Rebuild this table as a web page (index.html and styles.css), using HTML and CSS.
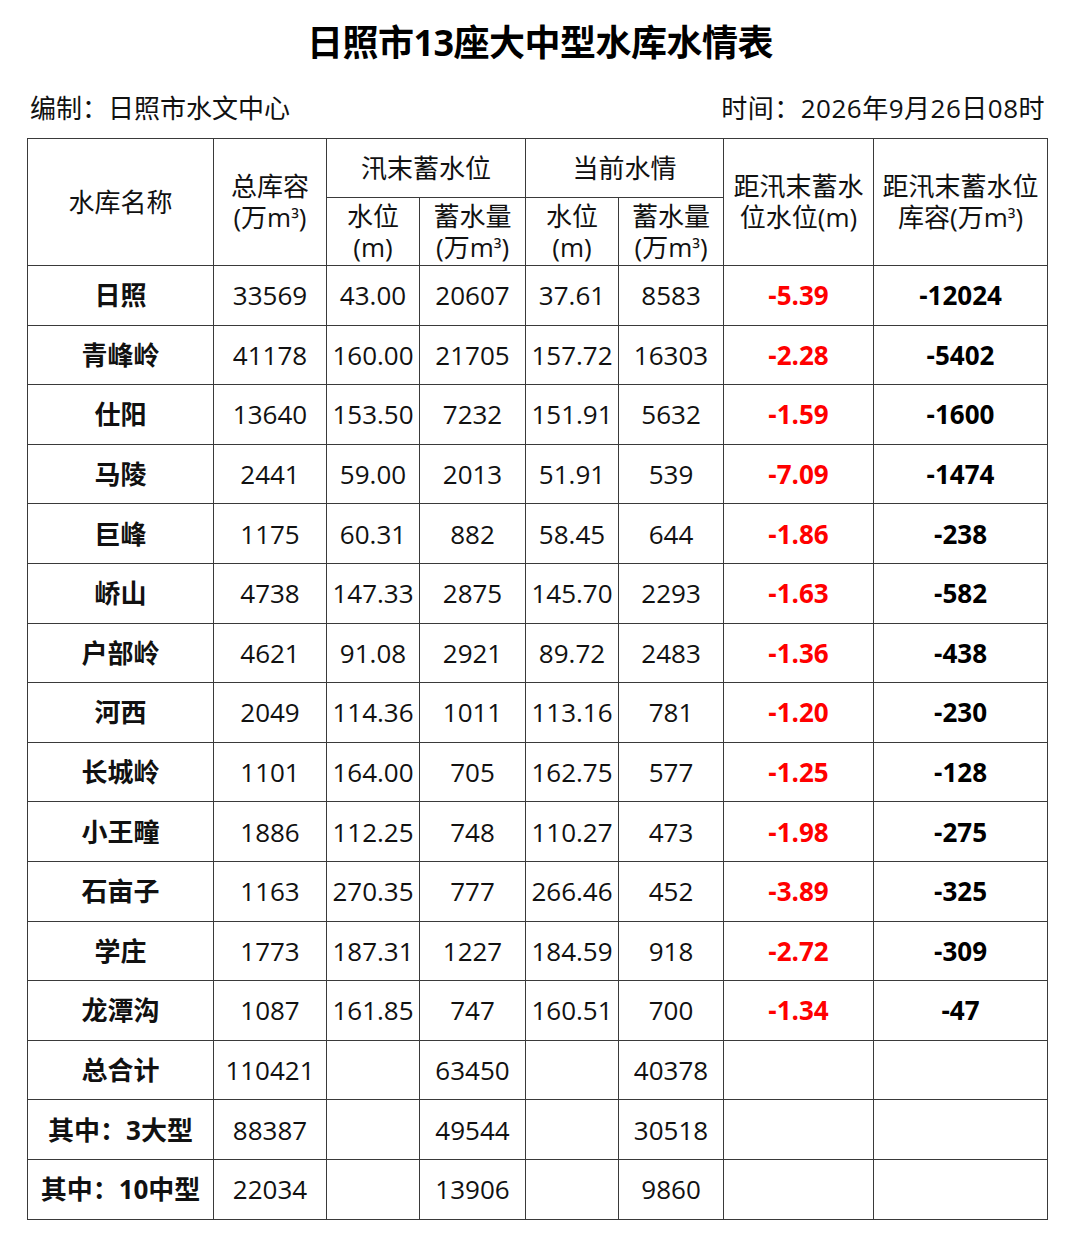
FILE: index.html
```html
<!DOCTYPE html>
<html lang="zh">
<head>
<meta charset="utf-8">
<link rel="stylesheet" href="styles.css">
</head>
<body>
<div class="page">
  <h1 class="title">日照市13座大中型水库水情表</h1>
  <div class="meta">
    <span>编制：日照市水文中心</span>
    <span class="time">时间：2026年9月26日08时</span>
  </div>
  <table class="grid">
    <colgroup>
      <col class="c1"><col class="c2"><col class="c3"><col class="c4"><col class="c5"><col class="c6"><col class="c7"><col class="c8">
    </colgroup>
    <thead>
      <tr class="h1row">
        <th rowspan="2">水库名称</th>
        <th rowspan="2"><span class="ln">总库容</span><span class="ln">(万m<span class="sup">³</span>)</span></th>
        <th colspan="2">汛末蓄水位</th>
        <th colspan="2">当前水情</th>
        <th rowspan="2"><span class="ln">距汛末蓄水</span><span class="ln">位水位(m)</span></th>
        <th rowspan="2"><span class="ln">距汛末蓄水位</span><span class="ln">库容(万m<span class="sup">³</span>)</span></th>
      </tr>
      <tr class="h2row">
        <th><span class="ln">水位</span><span class="ln">(m)</span></th>
        <th><span class="ln">蓄水量</span><span class="ln">(万m<span class="sup">³</span>)</span></th>
        <th><span class="ln">水位</span><span class="ln">(m)</span></th>
        <th><span class="ln">蓄水量</span><span class="ln">(万m<span class="sup">³</span>)</span></th>
      </tr>
    </thead>
    <tbody>
      <tr><td class="name">日照</td><td>33569</td><td>43.00</td><td>20607</td><td>37.61</td><td>8583</td><td class="red">-5.39</td><td class="bold">-12024</td></tr>
      <tr><td class="name">青峰岭</td><td>41178</td><td>160.00</td><td>21705</td><td>157.72</td><td>16303</td><td class="red">-2.28</td><td class="bold">-5402</td></tr>
      <tr><td class="name">仕阳</td><td>13640</td><td>153.50</td><td>7232</td><td>151.91</td><td>5632</td><td class="red">-1.59</td><td class="bold">-1600</td></tr>
      <tr><td class="name">马陵</td><td>2441</td><td>59.00</td><td>2013</td><td>51.91</td><td>539</td><td class="red">-7.09</td><td class="bold">-1474</td></tr>
      <tr><td class="name">巨峰</td><td>1175</td><td>60.31</td><td>882</td><td>58.45</td><td>644</td><td class="red">-1.86</td><td class="bold">-238</td></tr>
      <tr><td class="name">峤山</td><td>4738</td><td>147.33</td><td>2875</td><td>145.70</td><td>2293</td><td class="red">-1.63</td><td class="bold">-582</td></tr>
      <tr><td class="name">户部岭</td><td>4621</td><td>91.08</td><td>2921</td><td>89.72</td><td>2483</td><td class="red">-1.36</td><td class="bold">-438</td></tr>
      <tr><td class="name">河西</td><td>2049</td><td>114.36</td><td>1011</td><td>113.16</td><td>781</td><td class="red">-1.20</td><td class="bold">-230</td></tr>
      <tr><td class="name">长城岭</td><td>1101</td><td>164.00</td><td>705</td><td>162.75</td><td>577</td><td class="red">-1.25</td><td class="bold">-128</td></tr>
      <tr><td class="name">小王疃</td><td>1886</td><td>112.25</td><td>748</td><td>110.27</td><td>473</td><td class="red">-1.98</td><td class="bold">-275</td></tr>
      <tr><td class="name">石亩子</td><td>1163</td><td>270.35</td><td>777</td><td>266.46</td><td>452</td><td class="red">-3.89</td><td class="bold">-325</td></tr>
      <tr><td class="name">学庄</td><td>1773</td><td>187.31</td><td>1227</td><td>184.59</td><td>918</td><td class="red">-2.72</td><td class="bold">-309</td></tr>
      <tr><td class="name">龙潭沟</td><td>1087</td><td>161.85</td><td>747</td><td>160.51</td><td>700</td><td class="red">-1.34</td><td class="bold">-47</td></tr>
      <tr><td class="name">总合计</td><td>110421</td><td></td><td>63450</td><td></td><td>40378</td><td></td><td></td></tr>
      <tr><td class="name">其中：3大型</td><td>88387</td><td></td><td>49544</td><td></td><td>30518</td><td></td><td></td></tr>
      <tr><td class="name">其中：10中型</td><td>22034</td><td></td><td>13906</td><td></td><td>9860</td><td></td><td></td></tr>
    </tbody>
  </table>
</div>
</body>
</html>
```

FILE: styles.css
```css
html, body {
  margin: 0;
  padding: 0;
  background: #fff;
}
body {
  font-family: "Open Sans", "Noto Sans CJK SC", sans-serif;
  color: #111;
}
.page {
  width: 1080px;
  padding-top: 18px;
}
.title {
  margin: 0;
  font-size: 36px;
  line-height: 50px;
  font-weight: 700;
  text-align: center;
  color: #000;
  letter-spacing: -0.5px;
}
.meta {
  display: flex;
  justify-content: space-between;
  margin-top: 25px;
  padding: 0 35px 0 30px;
  font-size: 26px;
  line-height: 30px;
  height: 30px;
}
.time {
  letter-spacing: 0.5px;
}
.grid {
  margin: 15px 0 0 27px;
  width: 1020px;
  table-layout: fixed;
  border-collapse: collapse;
  font-size: 26px;
  border: 1.5px solid #555;
}
.c1 { width: 186px; }
.c2 { width: 113px; }
.c3 { width: 93px; }
.c4 { width: 106px; }
.c5 { width: 93px; }
.c6 { width: 105px; }
.c7 { width: 150px; }
.c8 { width: 174px; }
.grid th, .grid td {
  border: 1px solid #3a3a3a;
  padding: 0;
  text-align: center;
  vertical-align: middle;
  white-space: nowrap;
}
.grid th {
  font-weight: 400;
  line-height: 31px;
}
.ln {
  display: block;
  height: 31px;
  line-height: 31px;
}
.sup {
  font-size: 22px;
  line-height: 0;
}
.h1row { height: 59px; }
.h2row { height: 68px; }
.grid tbody tr { height: 59.6px; }
.grid td {
  line-height: 30px;
}
.name {
  font-weight: 700;
}
.red {
  color: #ff0000;
  font-weight: 700;
}
.bold {
  font-weight: 700;
  color: #000;
}
```
